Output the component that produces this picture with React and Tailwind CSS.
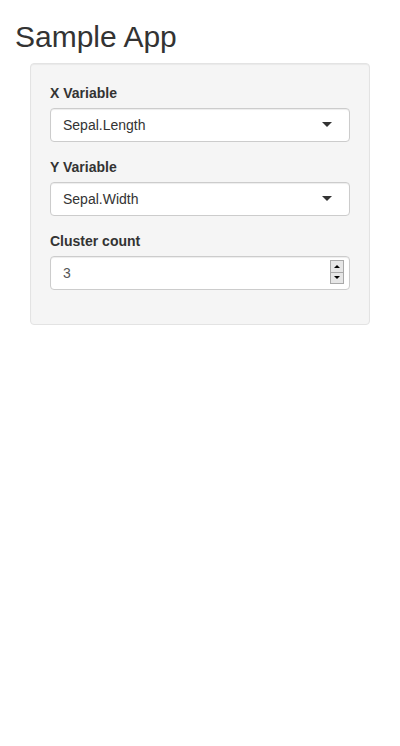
export default function App() {
  const font = { fontFamily: '"Liberation Sans", Arial, sans-serif' };
  return (
    <div className="min-h-[746px] bg-white px-[15px] text-[14px] leading-[20px] text-[#333]" style={font}>
      <h2 className="mt-[20px] mb-[10px] text-[30px] leading-[33px] font-medium text-[#333]">Sample App</h2>
      <div className="mb-[20px] rounded-[4px] border border-[#e3e3e3] bg-[#f5f5f5] p-[19px] shadow-[inset_0_1px_1px_rgba(0,0,0,0.05)] mx-[15px]">
        <Select label="X Variable" value="Sepal.Length" />
        <Select label="Y Variable" value="Sepal.Width" />
        <div className="mb-[15px]">
          <div className="mb-[5px] h-[20px] font-bold">Cluster count</div>
          <div className="relative flex h-[34px] items-center rounded-[4px] border border-[#ccc] bg-white px-[12px] text-[#555] shadow-[inset_0_1px_1px_rgba(0,0,0,0.075)]">
            <span>3</span>
            <div className="absolute right-[5px] top-[3px] flex h-[24px] w-[14px] flex-col border border-[#a9a9a9] bg-[#e6e6e6]">
              <div className="flex flex-1 items-center justify-center border-b border-[#a9a9a9]">
                <div className="h-0 w-0 border-x-[3px] border-b-[3px] border-x-transparent border-b-black" />
              </div>
              <div className="flex flex-1 items-center justify-center">
                <div className="h-0 w-0 border-x-[3px] border-t-[3px] border-x-transparent border-t-black" />
              </div>
            </div>
          </div>
        </div>
      </div>
    </div>
  );
}

function Select({ label, value }) {
  return (
    <div className="mb-[15px]">
      <div className="mb-[5px] h-[20px] font-bold">{label}</div>
      <div className="relative flex h-[34px] items-center rounded-[4px] border border-[#ccc] bg-white px-[12px] text-[#333] shadow-[inset_0_1px_1px_rgba(0,0,0,0.075)]">
        <span>{value}</span>
        <div className="absolute right-[17px] top-[13px] h-0 w-0 border-x-[5px] border-t-[5px] border-x-transparent border-t-[#333]" />
      </div>
    </div>
  );
}
